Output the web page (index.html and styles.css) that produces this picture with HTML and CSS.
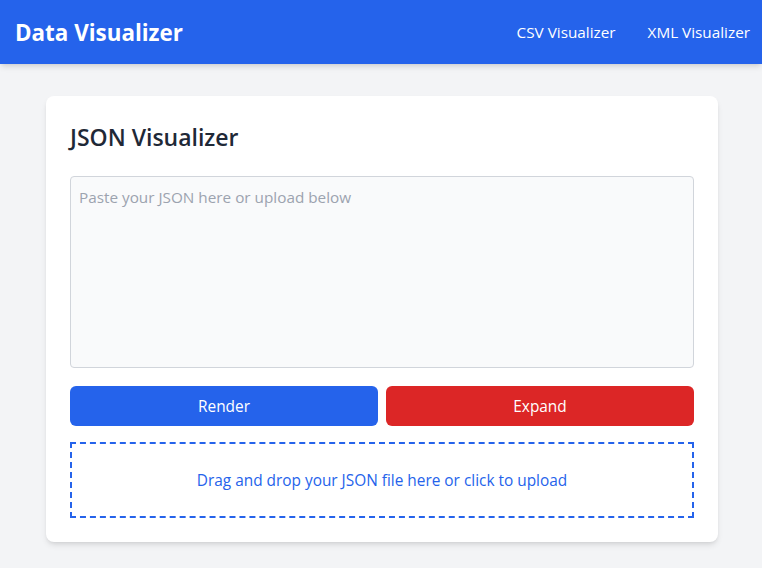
FILE: index.html
```html
<!DOCTYPE html>
<html lang="en">
<head>
<meta charset="utf-8">
<title>Data Visualizer</title>
<link rel="stylesheet" href="styles.css">
</head>
<body>
<header class="topbar">
  <div class="brand">Data Visualizer</div>
  <nav class="nav">
    <a class="nav-link" href="#">CSV Visualizer</a>
    <a class="nav-link" href="#">XML Visualizer</a>
  </nav>
</header>
<main class="main">
  <section class="card">
    <h1 class="card-title">JSON Visualizer</h1>
    <textarea class="json-input" placeholder="Paste your JSON here or upload below"></textarea>
    <div class="actions">
      <button class="btn btn-blue" type="button">Render</button>
      <button class="btn btn-red" type="button">Expand</button>
    </div>
    <div class="dropzone">Drag and drop your JSON file here or click to upload</div>
  </section>
</main>
</body>
</html>
```
FILE: styles.css
```css
* { box-sizing: border-box; }
html, body { margin: 0; padding: 0; }
body {
  background: #f3f4f6;
  font-family: "Open Sans", "Noto Sans", sans-serif;
  color: #1f2937;
  min-height: 568px;
}
.topbar {
  height: 64px;
  background: #2563eb;
  color: #fff;
  display: flex;
  align-items: center;
  justify-content: space-between;
  padding: 0 12px 0 15px;
  box-shadow: 0 4px 6px -1px rgba(0,0,0,0.1), 0 2px 4px -2px rgba(0,0,0,0.1);
}
.brand {
  font-size: 22.4px;
  font-weight: 700;
}
.nav {
  display: flex;
  gap: 32px;
}
.nav-link {
  color: #fff;
  text-decoration: none;
  font-size: 15.3px;
}
.main {
  padding: 32px 0 0 2px;
  display: flex;
  justify-content: center;
}
.card {
  width: 672px;
  background: #fff;
  border-radius: 8px;
  padding: 24px;
  box-shadow: 0 4px 6px -1px rgba(0,0,0,0.1), 0 2px 4px -2px rgba(0,0,0,0.1);
}
.card-title {
  margin: 0 0 24px;
  padding-top: 1px;
  height: 32px;
  font-size: 23px;
  line-height: 32px;
  font-weight: 600;
  color: #1f2937;
}
.json-input {
  display: block;
  width: 100%;
  height: 192px;
  resize: none;
  border: 1px solid #d1d5db;
  border-radius: 4px;
  background: #f9fafb;
  padding: 8px;
  font-family: inherit;
  font-size: 15.3px;
  line-height: 24px;
  color: #1f2937;
}
.json-input::placeholder { color: #9ca3af; }
.actions {
  margin-top: 18px;
  display: flex;
  gap: 8px;
}
.btn {
  flex: 1;
  height: 40px;
  border: none;
  border-radius: 6px;
  color: #fff;
  font-family: inherit;
  font-size: 15.4px;
}
.btn-blue { background: #2563eb; }
.btn-red { background: #dc2626; }
.dropzone {
  margin-top: 16px;
  border: 2px dashed #2563eb;
  padding: 24px 16px 22px;
  text-align: center;
  color: #2563eb;
  font-size: 15.4px;
  line-height: 26px;
}
```
